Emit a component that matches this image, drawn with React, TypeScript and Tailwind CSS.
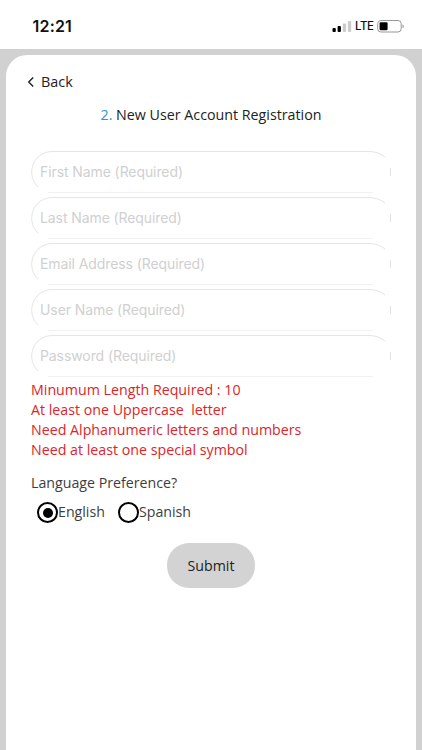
import React, { useState } from "react";

const fields = [
  { label: "First Name (Required)", type: "text" },
  { label: "Last Name (Required)", type: "text" },
  { label: "Email Address (Required)", type: "text" },
  { label: "User Name (Required)", type: "text" },
  { label: "Password (Required)", type: "password" },
];

function StatusBar() {
  return (
    <header className="flex h-[49px] shrink-0 items-start justify-between bg-white pt-[15px] pr-[17px] pl-[32.5px]">
      <span className="mt-[0.5px] font-['Inter'] text-[16px] leading-[21px] font-semibold tracking-[0.2px] text-[#111]">12:21</span>
      <div className="flex h-[21px] items-center">
        <svg width="20" height="14" viewBox="0 0 20 14" className="mr-[3px]">
          <rect x="0.5" y="9" width="3.3" height="4" rx="0.9" fill="#000" />
          <rect x="5.6" y="7" width="3.3" height="6" rx="0.9" fill="#000" />
          <rect x="10.8" y="4.6" width="3.3" height="8.4" rx="0.9" fill="#ccc" />
          <rect x="15.9" y="2" width="3.3" height="11" rx="0.9" fill="#ccc" />
        </svg>
        <span className="mt-px w-[22px] font-['Inter'] text-[11.5px] leading-[21px] font-medium tracking-[-0.5px] whitespace-nowrap text-[#111]">LTE</span>
        <svg width="28" height="14" viewBox="0 0 28 14">
          <rect x="0.7" y="1.500" width="23.5" height="11.5" rx="3.2" fill="#fff" stroke="#999" />
          <rect x="2.6" y="3.2" width="8" height="8.1" rx="1.2" fill="#000" />
          <path d="M25.800 5.700q1.5 1.5 0 3.3z" fill="#999" stroke="#999" strokeWidth="0.5" />
        </svg>
      </div>
    </header>
  );
}

function Field({ label, type }: { label: string; type: string }) {
  return (
    <label className="relative block h-[42px] w-[360px]">
      <svg width="360" height="43" viewBox="0 0 360 43" fill="none" className="pointer-events-none absolute inset-0">
        <path d="M7 36C3 32 .7 27 .7 21C.7 9.500 10 .5 21 .5H339Q348 1 354 6" stroke="#e5e5e5" />
        <path d="M17 41.500H342" stroke="#f1f1f1" />
        <path d="M359.500 17V25" stroke="#e3e3e3" />
      </svg>
      <input
        type={type}
        placeholder={label}
        className="block h-[41px] w-full bg-transparent px-[9px] font-['Inter'] text-[14px] tracking-[-0.09px] outline-none placeholder:text-[#d0d0d0]"
      />
    </label>
  );
}

function Radio({ label, selected, onSelect }: { label: string; selected: boolean; onSelect: () => void }) {
  return (
    <button type="button" role="radio" aria-checked={selected} onClick={onSelect} className="flex items-center">
      <span className="flex size-[21px] shrink-0 items-center justify-center rounded-full border-2 border-black">
        {selected && <span className="size-[10px] rounded-full bg-black" />}
      </span>
      <span className="mb-[2px] text-[14.2px] leading-5 text-[#3d3d3d]">{label}</span>
    </button>
  );
}

export default function App() {
  const [language, setLanguage] = useState("English");
  return (
    <div className="flex h-[750px] w-[422px] flex-col overflow-hidden bg-[#d1d1d1] font-['Open_Sans',sans-serif]">
      <StatusBar />
      <main className="mt-[6px] ml-[6px] flex w-[410px] grow flex-col rounded-t-[21px] bg-white pl-[25px]">
        <button type="button" className="mt-[17px] -ml-[4px] flex h-5 items-center self-start text-[14.4px] leading-5 text-[#222]">
          <svg width="8" height="12" viewBox="0 0 8 12" fill="none" className="mr-[6px]">
            <path d="M6.200 1.500L1.700 6L6.200 10.500" stroke="#222" strokeWidth="1.4" />
          </svg>
          Back
        </button>
        <h1 className="mt-[13px] ml-[69.5px] h-5 text-[14.25px] leading-5 whitespace-nowrap text-[#222]">
          <span className="text-[#3292cf]">2.</span> New User Account Registration
        </h1>
        <form className="mt-[26px] flex flex-col" onSubmit={(e) => e.preventDefault()}>
          <div className="flex flex-col gap-[4px]">
            {fields.map((field) => (
              <Field key={field.label} {...field} />
            ))}
          </div>
          <div className="mt-[3px] text-[14.23px] leading-[20px] whitespace-pre text-[#dd2528]">
            <p>Minumum Length Required : 10</p>
            <p>At least one Uppercase  letter</p>
            <p>Need Alphanumeric letters and numbers</p>
            <p>Need at least one special symbol</p>
          </div>
          <p className="mt-[13px] h-5 text-[14.2px] leading-5 text-[#3d3d3d]">Language Preference?</p>
          <div role="radiogroup" className="mt-[9px] ml-[6px] flex h-[21px] gap-[13px]">
            {["English", "Spanish"].map((name) => (
              <Radio key={name} label={name} selected={language === name} onSelect={() => setLanguage(name)} />
            ))}
          </div>
          <button type="submit" className="mt-[20px] ml-[136px] h-[45px] w-[88px] rounded-[22px] bg-[#d3d3d3] text-[14.2px] text-[#222]">
            Submit
          </button>
        </form>
      </main>
    </div>
  );
}
